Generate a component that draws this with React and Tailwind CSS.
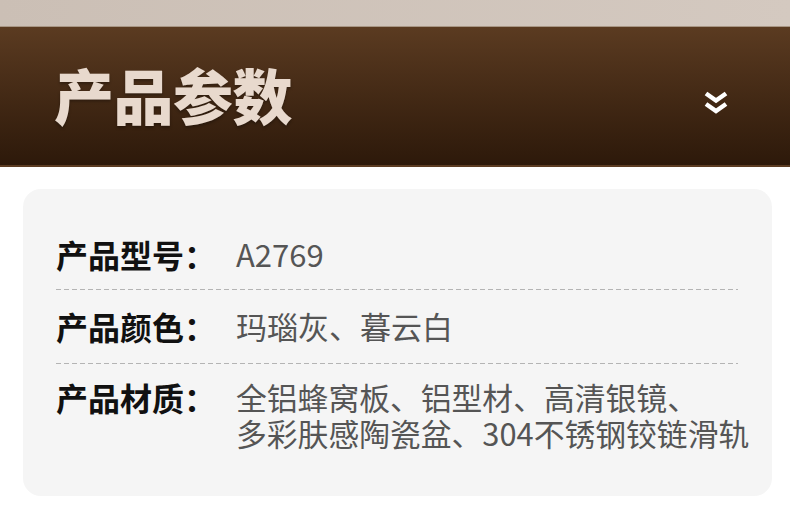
export default function App() {
  const font = { fontFamily: '"Noto Sans CJK SC", "Noto Sans", sans-serif' };
  const dash = "h-px bg-[linear-gradient(to_right,#b4b4b4_5px,transparent_5px)] bg-[length:8px_1px] bg-repeat-x";
  return (
    <div className="w-[790px] h-[522px] bg-white overflow-hidden" style={font}>
      <div className="h-[27px] bg-gradient-to-r from-[#cbbfb5] to-[#d4c9c0] border-b border-[#a89684]" />
      <div className="h-[140px] bg-gradient-to-b from-[#5b3b21] to-[#2d190a] border-b-2 border-[#5c3c22] flex items-center justify-between pl-[54px] pr-[62px]">
        <div className="text-[60px] leading-none font-black text-[#e8d9cd] tracking-[-0.5px] pb-[4px] [text-shadow:0_2px_3px_rgba(0,0,0,0.3)]">
          产品参数
        </div>
        <svg width="24" height="24" viewBox="0 0 24 24" className="mt-[14px]">
          <polyline points="2,2.5 12,9.5 22,2.5" fill="none" stroke="#ffffff" strokeWidth="4.5" strokeLinejoin="miter" />
          <polyline points="2,13 12,20 22,13" fill="none" stroke="#ffffff" strokeWidth="4.5" strokeLinejoin="miter" />
        </svg>
      </div>
      <div className="ml-[23px] w-[749px] mt-[22px] h-[307px] rounded-[18px] bg-[#f5f5f5] pl-[33px] pr-[34px]">
        <div className="flex items-center pt-[47px] pb-[17px] leading-[36px]">
          <div className="w-[180px] shrink-0 font-bold text-[32px] text-[#111]">产品型号：</div>
          <div className="text-[31px] text-[#555]">A2769</div>
        </div>
        <div className={dash} />
        <div className="flex items-center pt-[18px] pb-[19px] leading-[36px]">
          <div className="w-[180px] shrink-0 font-bold text-[32px] text-[#111]">产品颜色：</div>
          <div className="text-[31px] text-[#555]">玛瑙灰、暮云白</div>
        </div>
        <div className={dash} />
        <div className="flex items-start pt-[15px] leading-[36px]">
          <div className="w-[180px] shrink-0 font-bold text-[32px] text-[#111]">产品材质：</div>
          <div className="text-[30.8px] text-[#555] whitespace-nowrap">
            <div>全铝蜂窝板、铝型材、高清银镜、</div>
            <div>多彩肤感陶瓷盆、304不锈钢铰链滑轨</div>
          </div>
        </div>
      </div>
    </div>
  );
}
